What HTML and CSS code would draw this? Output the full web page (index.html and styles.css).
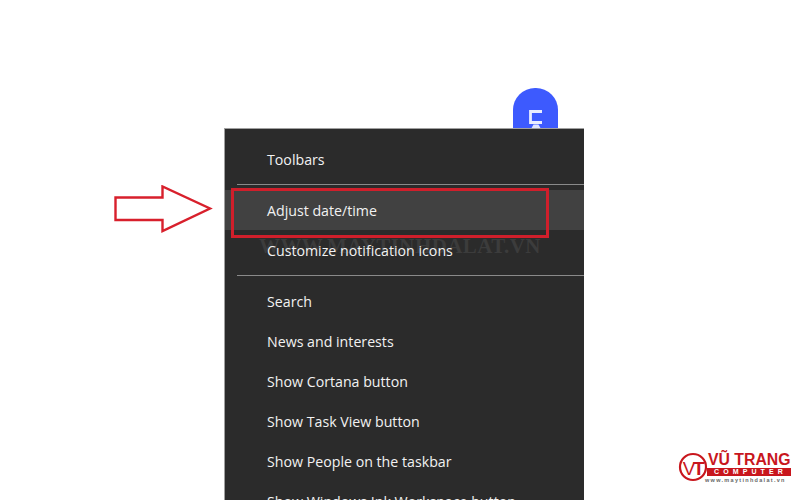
FILE: index.html
```html
<!DOCTYPE html>
<html lang="vi">
<head>
<meta charset="utf-8">
<title>Taskbar context menu</title>
<link rel="stylesheet" href="styles.css">
</head>
<body>
<main class="stage">
  <div class="bubble">
    <svg class="bubble-glyph" width="15" height="20" viewBox="0 0 15 20" aria-hidden="true">
      <path d="M14 2.500H2.500V13.500H14" fill="none" stroke="#e8ecff" stroke-width="2.800"/>
      <path d="M5.500 15.500H10.500L13 20H3Z" fill="#dfe4ff"/>
    </svg>
  </div>

  <svg class="arrow" width="100" height="50" viewBox="0 0 100 50" aria-hidden="true">
    <path d="M1.500 12.500H48.500V1.500L96 23.500L48.500 46V35H1.500Z" fill="#fff" stroke="#d8202c" stroke-width="2.400" stroke-linejoin="miter"/>
  </svg>

  <nav class="menu">
    <div class="item">Toolbars</div>
    <div class="sep sep-first"></div>
    <div class="item item-hover">Adjust date/time</div>
    <div class="item">Customize notification icons</div>
    <div class="sep sep-second"></div>
    <div class="item">Search</div>
    <div class="item">News and interests</div>
    <div class="item">Show Cortana button</div>
    <div class="item">Show Task View button</div>
    <div class="item">Show People on the taskbar</div>
    <div class="item">Show Windows Ink Workspace button</div>
    <div class="watermark">WWW.MAYTINHDALAT.VN</div>
    <div class="highlight"></div>
  </nav>

  <div class="logo">
    <svg class="logo-mark" width="30" height="30" viewBox="0 0 30 30" aria-hidden="true">
      <circle cx="15" cy="15" r="13" fill="#fff" stroke="#c8161d" stroke-width="2.200"/>
      <text x="14.500" y="23" text-anchor="middle" class="logo-vt"><tspan class="logo-v">V</tspan>T</text>
    </svg>
    <div class="logo-text">
      <div class="logo-name">VŨ TRANG</div>
      <div class="logo-band">COMPUTER</div>
      <div class="logo-url">www.maytinhdalat.vn</div>
    </div>
  </div>
</main>
</body>
</html>
```

FILE: styles.css
```css
* { box-sizing: border-box; }
html, body { margin: 0; padding: 0; background: #fff; }
.stage { position: relative; width: 800px; height: 500px; overflow: hidden; background: #fff; font-family: "Open Sans", "Noto Sans", sans-serif; }

.bubble { position: absolute; left: 513px; top: 88px; width: 45px; height: 60px; background: #3d5afe; border-radius: 22px 22px 0 0; display: flex; justify-content: center; align-items: flex-start; }
.bubble-glyph { margin-top: 21px; }

.arrow { position: absolute; left: 114px; top: 185px; }

.menu { position: absolute; left: 224px; top: 128px; width: 360px; height: 372px; overflow: hidden; background: #2b2b2b; border: 1px solid #a0a0a0; border-right: 0; border-bottom: 0; padding-top: 10px; }
.item { height: 40px; padding-left: 42px; display: flex; align-items: center; color: #f2f2f2; font-size: 14.200px; position: relative; z-index: 1; }
.sep { height: 1px; margin-left: 12px; background: #8a8a8a; }
.sep-first { margin-top: 5px; margin-bottom: 5px; }
.sep-second { margin-top: 5px; margin-bottom: 5px; }
.item-hover { background: #414141; }

.watermark { position: absolute; left: 34px; top: 107px; color: #3c3c3c; font: 700 21px/1 "Liberation Serif", serif; white-space: nowrap; letter-spacing: .4px; }
.highlight { position: absolute; left: 6px; top: 59px; width: 318px; height: 50px; border: 3px solid #d01f2b; z-index: 2; }

.logo { position: absolute; left: 678px; top: 452px; display: flex; align-items: flex-start; }
.logo-mark { margin-right: -1px; }
.logo-vt { font: 700 19px "Liberation Sans", sans-serif; fill: #c8161d; letter-spacing: -2.500px; }
.logo-v { font-weight: 400; }
.logo-text { display: flex; flex-direction: column; width: 84px; }
.logo-name { color: #c8161d; font: 700 15.800px/16px "Liberation Sans", sans-serif; white-space: nowrap; padding-left: 1px; }
.logo-band { background: #c8161d; color: #fff; font: 700 7px/8px "Liberation Sans", sans-serif; letter-spacing: 4.100px; padding-left: 7px; height: 8px; white-space: nowrap; overflow: hidden; }
.logo-url { color: #666; font: 700 5.500px/8px "Liberation Sans", sans-serif; letter-spacing: 1.300px; white-space: nowrap; margin-left: -2px; }
```
